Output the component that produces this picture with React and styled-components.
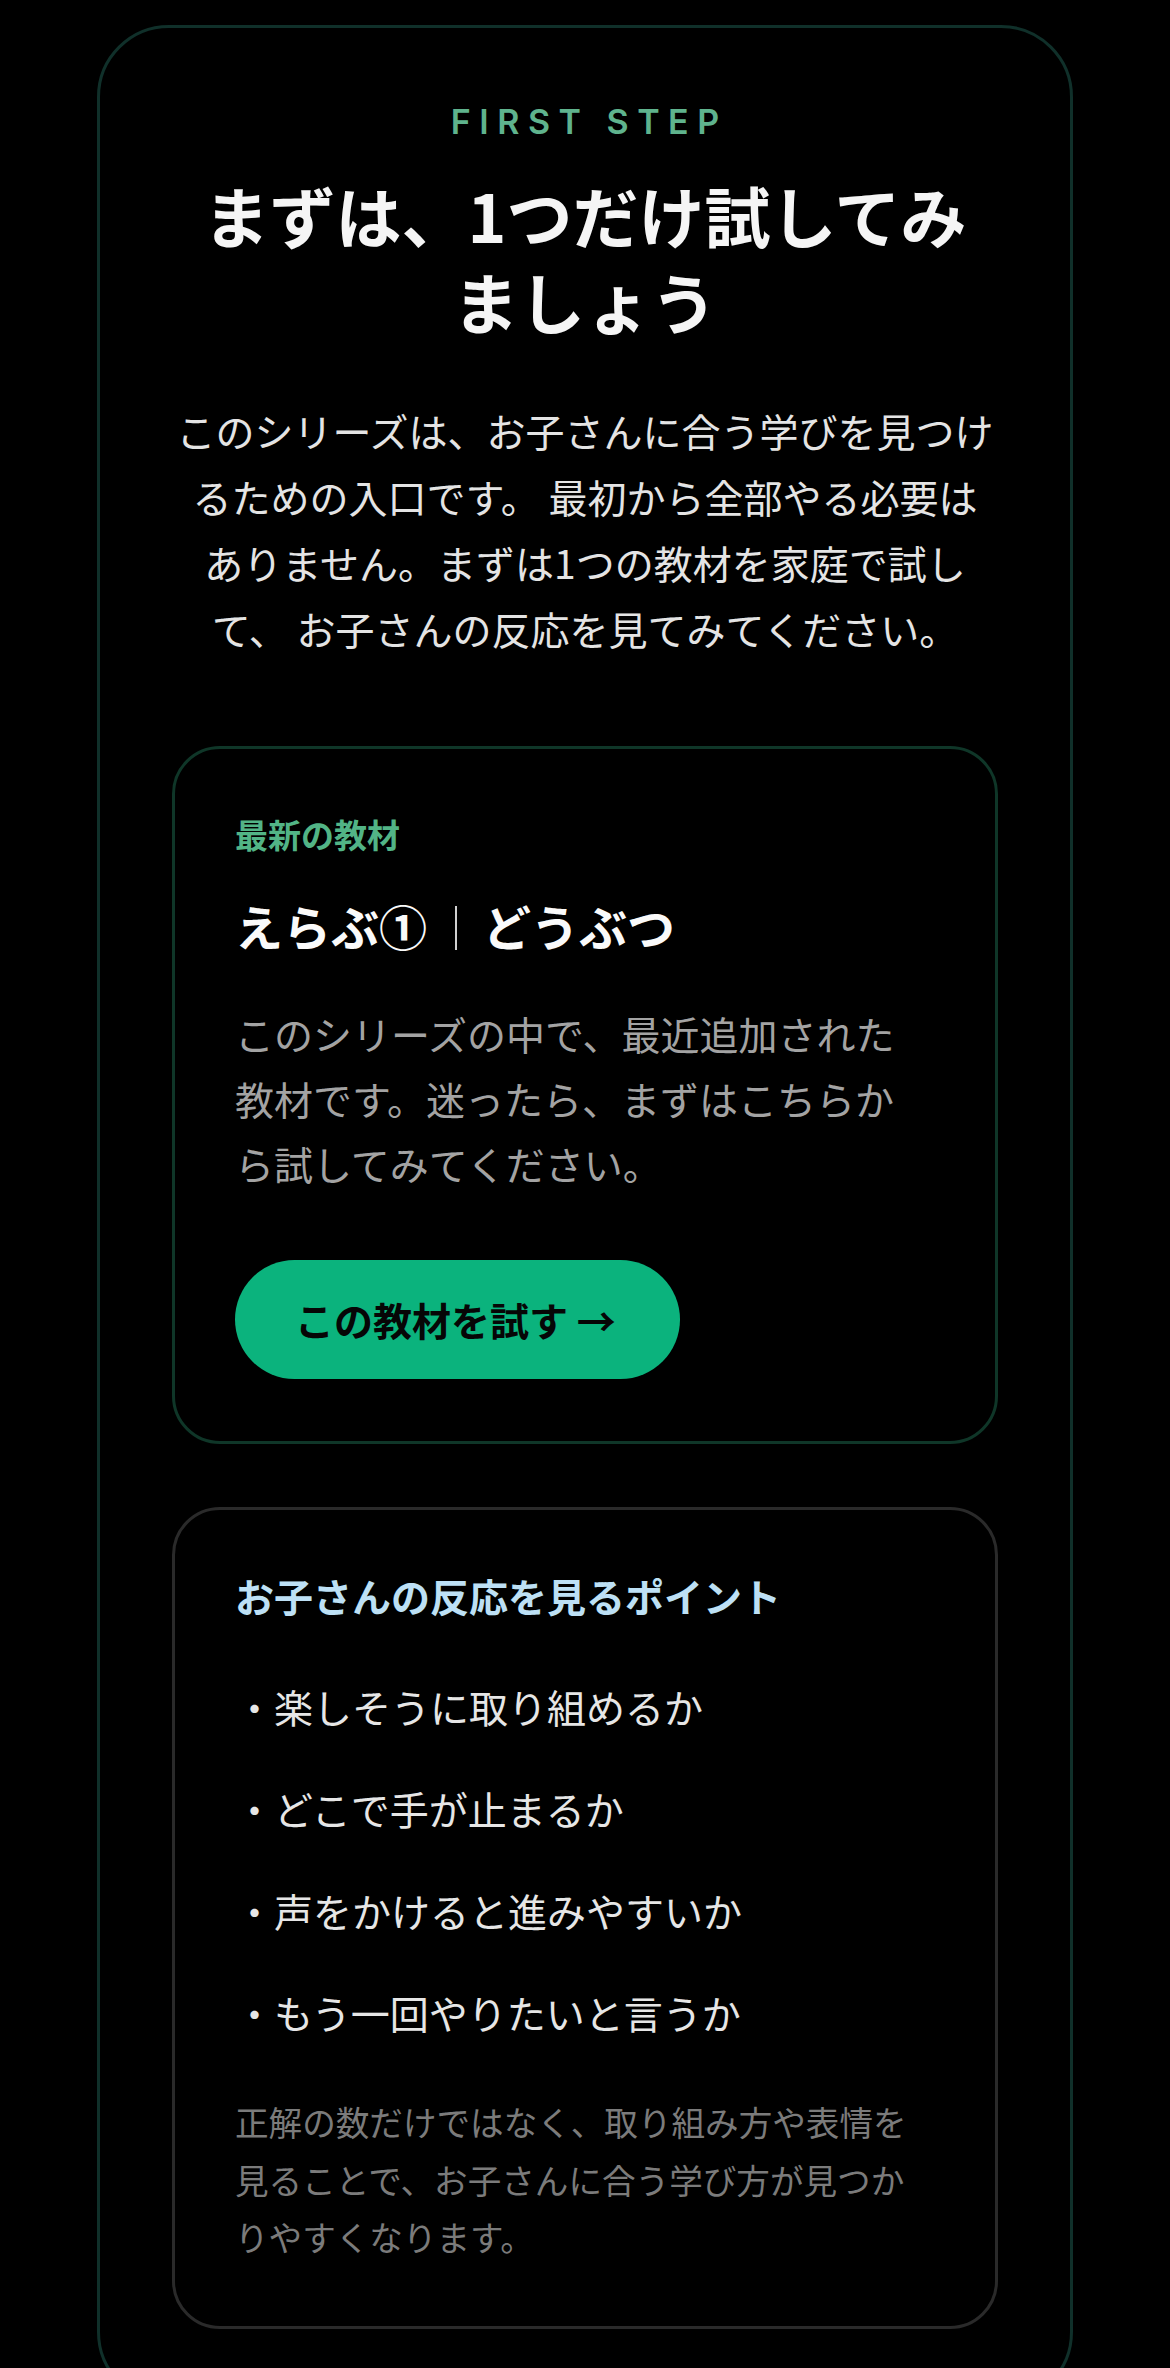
import React from 'react'
import styled, { createGlobalStyle } from 'styled-components'

const GlobalStyle = createGlobalStyle`
  html, body {
    margin: 0;
    padding: 0;
    background: #000;
  }
  * {
    box-sizing: border-box;
  }
  body {
    font-family: Inter, "Noto Sans CJK JP", sans-serif;
    -webkit-font-smoothing: antialiased;
  }
`

const points = [
  '楽しそうに取り組めるか',
  'どこで手が止まるか',
  '声をかけると進みやすいか',
  'もう一回やりたいと言うか',
]

const App = () => {
  return (
    <Page>
      <GlobalStyle />
      <Panel>
        <Eyebrow>FIRST STEP</Eyebrow>
        <Title>まずは、1つだけ試してみましょう</Title>
        <Lead>
          このシリーズは、お子さんに合う学びを見つけ<br />
          るための入口です。 最初から全部やる必要は<br />
          ありません。まずは1つの教材を家庭で試し<br />
          て、 お子さんの反応を見てみてください。
        </Lead>

        <Stack>
          <Card $tone="accent">
            <Label>最新の教材</Label>
            <Name>
              <span>えらぶ①</span>
              <Divider />
              <span>どうぶつ</span>
            </Name>
            <Desc>
              このシリーズの中で、最近追加された<br />
              教材です。迷ったら、まずはこちらか<br />
              ら試してみてください。
            </Desc>
            <TryButton type="button">この教材を試す →</TryButton>
          </Card>

          <Card $tone="muted">
            <PointsTitle>お子さんの反応を見るポイント</PointsTitle>
            <PointList>
              {points.map((p) => (
                <Point key={p}>・{p}</Point>
              ))}
            </PointList>
            <Note>
              正解の数だけではなく、取り組み方や表情を見ることで、お子さんに合う学び方が見つかりやすくなります。
            </Note>
          </Card>
        </Stack>
      </Panel>
    </Page>
  )
}

const Page = styled.div`
  background: #000;
  padding: 25px 97px 0;
  min-height: 2368px;
  overflow: hidden;
`

const Panel = styled.section`
  border: 3px solid #10302a;
  border-radius: 72px;
  padding: 72px;
  display: flex;
  flex-direction: column;
  align-items: center;
  text-align: center;
`

const Eyebrow = styled.div`
  font-family: Inter, "Noto Sans CJK JP", sans-serif;
  font-size: 34px;
  font-weight: 600;
  line-height: 44px;
  letter-spacing: 0.25em;
  margin-right: -0.25em;
  color: #5fb38d;
`

const Title = styled.h1`
  margin: 27px 0 0;
  font-family: "Noto Sans CJK JP", sans-serif;
  font-size: 66px;
  font-weight: 700;
  line-height: 86px;
  color: #f5f5f5;
`

const Lead = styled.p`
  margin: 54px 0 0;
  font-family: "Noto Sans CJK JP", sans-serif;
  font-size: 39px;
  line-height: 66px;
  color: #e4e4e4;
`

const Stack = styled.div`
  width: 100%;
  margin-top: 85px;
  display: flex;
  flex-direction: column;
  gap: 63px;
  text-align: left;
`

const Card = styled.div`
  border: 3px solid ${(p) => (p.$tone === 'accent' ? '#0f3628' : '#2a2a2a')};
  border-radius: 48px;
  padding: ${(p) => (p.$tone === 'accent' ? '60px 60px 62px' : '55px 60px 60px')};
  font-family: "Noto Sans CJK JP", sans-serif;
`

const Label = styled.div`
  font-size: 33px;
  font-weight: 700;
  line-height: 50px;
  color: #52b486;
`

const Name = styled.div`
  margin-top: 33px;
  display: flex;
  align-items: center;
  font-size: 48px;
  font-weight: 700;
  line-height: 67px;
  color: #fafafa;
`

const Divider = styled.span`
  display: inline-block;
  width: 2px;
  height: 44px;
  margin: 4px 26px 0 28px;
  background: #d0d0d0;
`

const Desc = styled.p`
  margin: 42px 0 0;
  font-size: 39px;
  line-height: 65px;
  color: #a3a3a3;
`

const TryButton = styled.button`
  margin-top: 64px;
  height: 119px;
  padding: 0 64px 0 60px;
  border: none;
  border-radius: 60px;
  background: #0bb37d;
  color: #060606;
  font-family: "Noto Sans CJK JP", sans-serif;
  font-size: 39px;
  font-weight: 700;
  line-height: 1;
  cursor: pointer;
`

const PointsTitle = styled.h3`
  margin: 0;
  font-size: 39px;
  font-weight: 700;
  line-height: 60px;
  color: #bde0f5;
`

const PointList = styled.ul`
  list-style: none;
  margin: 48px 0 0;
  padding: 0;
  display: flex;
  flex-direction: column;
  gap: 36px;
`

const Point = styled.li`
  font-size: 39px;
  line-height: 66px;
  color: #e6e6e6;
`

const Note = styled.p`
  margin: 48px 0 0;
  font-size: 33.6px;
  line-height: 57.5px;
  color: #7b7b7b;
`

export default App
